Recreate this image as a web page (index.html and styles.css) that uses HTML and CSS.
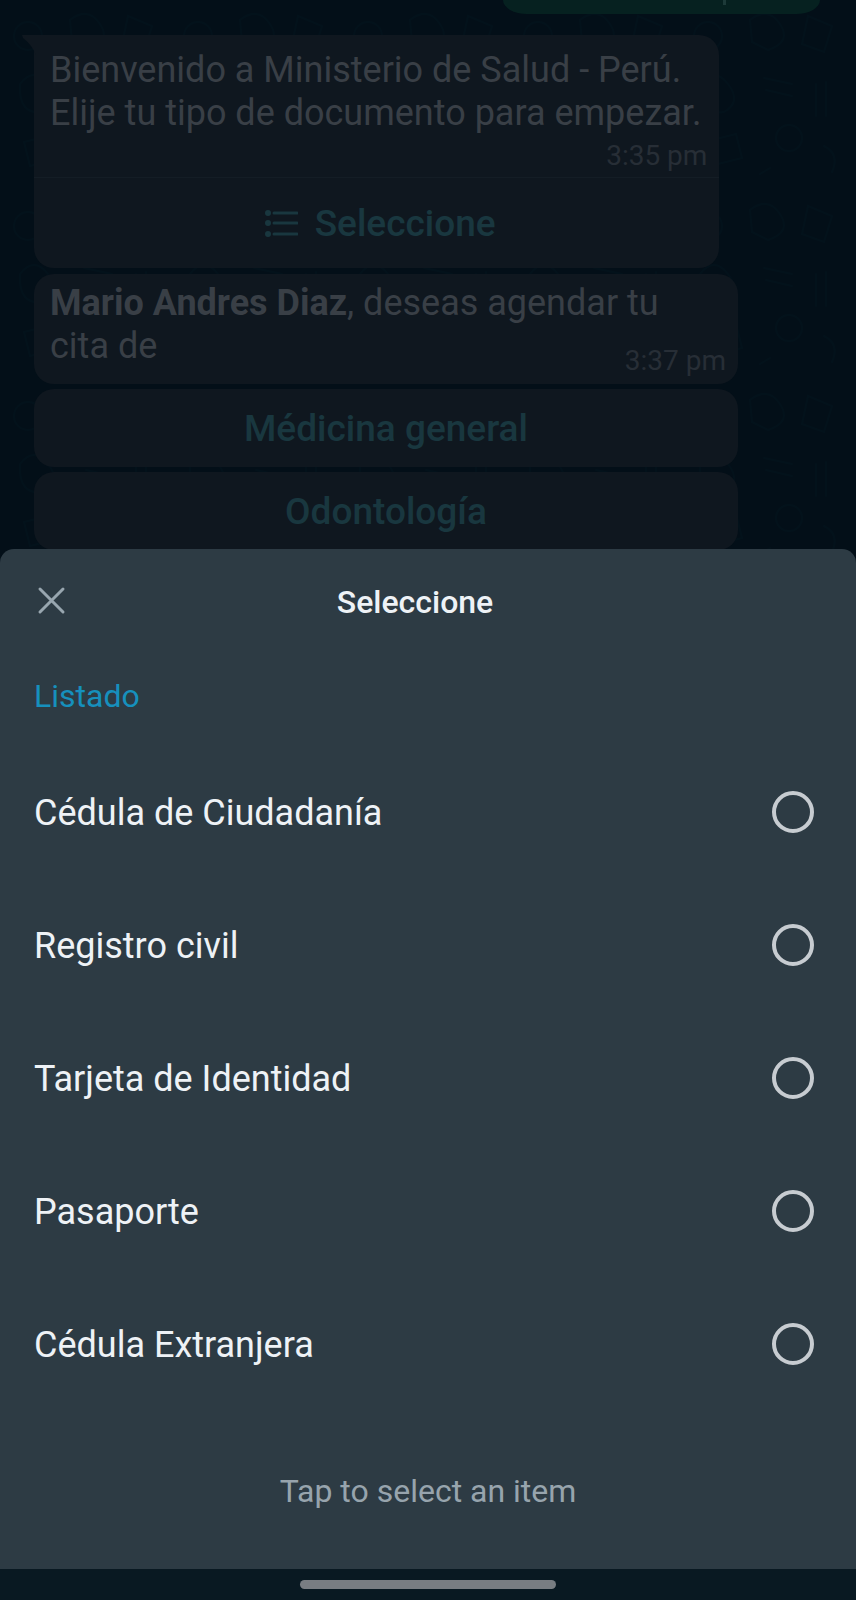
FILE: index.html
```html
<!DOCTYPE html>
<html lang="es">
<head>
<meta charset="utf-8">
<meta name="viewport" content="width=device-width, initial-scale=1">
<title>Seleccione</title>
<link rel="stylesheet" href="styles.css">
</head>
<body>
<main class="chat">
  <svg class="doodles" aria-hidden="true">
    <defs>
      <pattern id="doodle" width="170" height="190" patternUnits="userSpaceOnUse">
        <g fill="none" stroke="#06202a" stroke-width="2" stroke-linecap="round">
          <circle cx="28" cy="36" r="14"/>
          <path d="M70 20q18-14 30 4t-12 26l-16-8zM128 16l24 10-8 26-22-8zM20 84q14-18 28 0t-4 28q-26 4-24-28zM84 78l28 6M86 90l26 6M136 84v32M146 82v34M24 142l32-8 6 24-32 8zM96 138a13 13 0 1 0 26 0 13 13 0 1 0-26 0M144 146q16 8 8 26M80 174l10-6"/>
        </g>
      </pattern>
    </defs>
    <rect width="100%" height="100%" fill="url(#doodle)"/>
  </svg>
  <div class="sent"></div>
  <article class="bubble bubble-first">
    <svg class="tail" viewBox="0 0 14 20" aria-hidden="true"><path d="M0 0h14v20Q10 10 1 3z"/></svg>
    <div class="message">
      <p class="text">Bienvenido a Ministerio de Salud - Perú.<br>Elije tu tipo de documento para empezar.</p>
      <time class="time">3:35 pm</time>
    </div>
    <button class="action" type="button">
      <svg class="list-icon" viewBox="0 0 40 28" aria-hidden="true">
        <g fill="currentColor"><circle cx="10" cy="4" r="3"/><circle cx="10" cy="14" r="3"/><circle cx="10" cy="25" r="3"/></g>
        <path d="M16 4h23M16 14h23M16 25h23" stroke="currentColor" stroke-width="3" stroke-linecap="round"/>
      </svg>
      Seleccione
    </button>
  </article>
  <section class="group">
    <article class="bubble message message-compact">
      <p class="text"><strong>Mario Andres Diaz</strong>, deseas agendar tu cita de</p>
      <time class="time time-inline">3:37 pm</time>
    </article>
    <button class="bubble reply" type="button">Médicina general</button>
    <button class="bubble reply" type="button">Odontología</button>
  </section>
</main>

<section class="sheet" role="dialog" aria-labelledby="sheet-title">
  <header class="sheet-header">
    <button class="close" type="button" aria-label="Cerrar">
      <svg class="close-icon" viewBox="0 0 34 34" aria-hidden="true"><path d="M6 4l23 23M29 4L6 27"/></svg>
    </button>
    <h1 class="title" id="sheet-title">Seleccione</h1>
  </header>
  <form class="options">
    <h2 class="label">Listado</h2>
    <label class="option"><span class="name">Cédula de Ciudadanía</span><input class="radio" type="radio" name="documento"></label>
    <label class="option"><span class="name">Registro civil</span><input class="radio" type="radio" name="documento"></label>
    <label class="option"><span class="name">Tarjeta de Identidad</span><input class="radio" type="radio" name="documento"></label>
    <label class="option"><span class="name">Pasaporte</span><input class="radio" type="radio" name="documento"></label>
    <label class="option"><span class="name">Cédula Extranjera</span><input class="radio" type="radio" name="documento"></label>
  </form>
  <p class="hint">Tap to select an item</p>
</section>
<footer class="navbar"><div class="handle"></div></footer>
</body>
</html>
```

FILE: styles.css
```css
* {
  box-sizing: border-box;
}

body {
  margin: 0;
  height: 100vh;
  display: flex;
  flex-direction: column;
  background: #030f18;
  font-family: Roboto, "Liberation Sans", sans-serif;
  font-size: 36px;
  line-height: 43px;
}

p, h1, h2 {
  margin: 0;
}

button {
  border: 0;
  padding: 0;
  background: none;
  font: inherit;
  cursor: pointer;
}

.chat {
  position: relative;
  flex: 1 1 0;
  overflow: hidden;
  display: flex;
  flex-direction: column;
  align-items: flex-start;
}

.doodles {
  position: absolute;
  inset: 0;
  width: 100%;
  height: 100%;
  opacity: 0.2;
}

.sent {
  position: relative;
  flex: none;
  align-self: flex-end;
  width: 37%;
  height: 14px;
  margin: 0 36px 21px 0;
  border-radius: 0 0 24px 24px / 0 0 14px 14px;
  background: #062120;
}

/* Descender of the timestamp scrolled out of view */
.sent::before {
  content: "";
  position: absolute;
  top: 0;
  right: 94px;
  width: 3px;
  height: 5px;
  background: #1d3a39;
}

.bubble {
  position: relative;
  flex: none;
  border-radius: 20px;
  background: #0f171f;
  color: #393f46;
}

.bubble-first {
  margin: 0 16px 6px 34px;
  border-top-left-radius: 0;
}

.tail {
  position: absolute;
  top: 0;
  left: -12px;
  width: 14px;
  height: 20px;
  fill: #0f171f;
}

.message {
  display: flex;
  flex-direction: column;
  padding: 14px 18px 5px 16px;
}

.message-compact {
  padding: 8px 18px 7px 16px;
}

.time {
  align-self: flex-end;
  margin: 4px -6px 0 0;
  color: #272e36;
  font-size: 28px;
  line-height: 33px;
}

.time-inline {
  margin: -24px -6px 0 0;
}

.action {
  display: flex;
  align-items: center;
  justify-content: center;
  gap: 17px;
  width: 100%;
  height: 91px;
  border-top: 1px solid #141d25;
  color: #19373f;
  font-size: 37px;
  font-weight: 500;
}

.list-icon {
  width: 40px;
  height: 28px;
}

.group {
  align-self: stretch;
  display: flex;
  flex-direction: column;
  gap: 5px;
  margin: 0 118px 0 34px;
}

.reply {
  height: 78px;
  color: #19373f;
  font-size: 37px;
  font-weight: 500;
}

.sheet {
  flex: none;
  border-radius: 14px 14px 0 0;
  background: #2d3b44;
  color: #eef2f6;
}

.sheet-header {
  display: grid;
  grid-template-columns: 34px 1fr 34px;
  align-items: center;
  height: 106px;
  padding: 0 60px 0 34px;
}

.close {
  height: 34px;
}

.close-icon {
  display: block;
  width: 34px;
  height: 34px;
  stroke: #98a6af;
  stroke-width: 3;
  stroke-linecap: round;
}

.title {
  font-size: 32px;
  font-weight: 500;
  text-align: center;
}

.label {
  height: 90px;
  padding: 20px 34px 0;
  color: #1690bd;
  font-size: 32px;
  font-weight: 400;
}

.option {
  display: flex;
  align-items: center;
  justify-content: space-between;
  height: 133px;
  padding: 0 42px 0 34px;
  cursor: pointer;
}

.name {
  padding-top: 4px;
}

.radio {
  appearance: none;
  width: 42px;
  height: 42px;
  margin: 0;
  border: 4px solid #c7ccd1;
  border-radius: 50%;
}

.radio:checked {
  background: radial-gradient(#1690bd 50%, transparent 55%);
}

.hint {
  padding: 60px 34px 56px;
  color: #97a4ad;
  font-size: 32px;
  text-align: center;
}

.navbar {
  flex: none;
  display: flex;
  align-items: center;
  justify-content: center;
  height: 31px;
  background: #091922;
}

.handle {
  width: 30%;
  height: 9px;
  border-radius: 5px;
  background: #787d82;
}
```
